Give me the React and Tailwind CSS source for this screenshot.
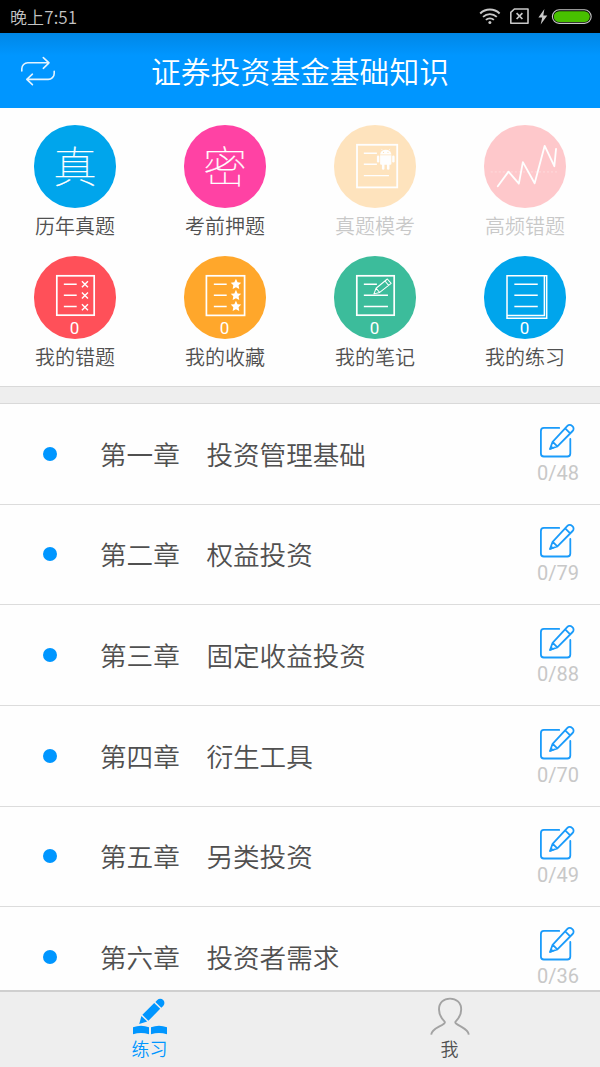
import clsx from "clsx";

const shortcuts = [
  { label: "历年真题", color: "bg-[#00a5ec]", char: "真" },
  { label: "考前押题", color: "bg-[#ff42a4]", char: "密" },
  { label: "真题模考", color: "bg-[#ffa72b]", icon: MockIcon, disabled: true },
  { label: "高频错题", color: "bg-[#ff5059]", icon: TrendIcon, disabled: true },
  { label: "我的错题", color: "bg-[#ff5059]", icon: WrongIcon, count: 0 },
  { label: "我的收藏", color: "bg-[#ffa72b]", icon: StarIcon, count: 0 },
  { label: "我的笔记", color: "bg-[#3cbc9b]", icon: NoteIcon, count: 0 },
  { label: "我的练习", color: "bg-[#00a5ec]", icon: BookIcon, count: 0 },
];

const chapters = [
  { no: "第一章", name: "投资管理基础", total: 48 },
  { no: "第二章", name: "权益投资", total: 79 },
  { no: "第三章", name: "固定收益投资", total: 88 },
  { no: "第四章", name: "衍生工具", total: 70 },
  { no: "第五章", name: "另类投资", total: 49 },
  { no: "第六章", name: "投资者需求", total: 36 },
];

function IconBase({ children }) {
  return (
    <svg className="absolute inset-0 w-full h-full" viewBox="0.3 0.3 82 82" fill="none" stroke="white" strokeWidth="1.4">
      {children}
    </svg>
  );
}

function MockIcon() {
  return (
    <IconBase>
      <rect x="23.2" y="20" width="40" height="42.4" strokeWidth="1.8" />
      <path d="M30 28.4h13M30 39.4h13M30 50.7h25" />
      <g fill="white" stroke="none">
        <path d="M46.2 29.6a5.6 4.6 0 0 1 11.2 0z" />
        <path d="M46.2 30.4h11.2v8.4a1 1 0 0 1-1 1h-9.2a1 1 0 0 1-1-1z" />
        <rect x="43" y="30.6" width="2.4" height="7" rx="1.2" />
        <rect x="58.2" y="30.6" width="2.4" height="7" rx="1.2" />
        <rect x="48" y="38" width="2.5" height="6.8" rx="1.2" />
        <rect x="53" y="38" width="2.5" height="6.8" rx="1.2" />
      </g>
      <path d="M48.5 25.5l-1-1.4M55 25.5l1-1.4" strokeWidth="0.6" />
      <circle cx="49.6" cy="27.6" r="0.6" fill="#ffa72b" stroke="none" />
      <circle cx="54" cy="27.6" r="0.6" fill="#ffa72b" stroke="none" />
    </IconBase>
  );
}

function TrendIcon() {
  return (
    <IconBase>
      <path d="M7 47h68" strokeWidth="0.8" strokeDasharray="2 2" opacity="0.4" />
      <path
        d="M14 61.3L24.7 46.7 35 58.7 39 37.3 50.7 58.3 60.7 21 70.3 41.3 72 24"
        strokeWidth="1.8"
        strokeLinecap="round"
        strokeLinejoin="round"
      />
    </IconBase>
  );
}

function WrongIcon() {
  return (
    <IconBase>
      <rect x="23" y="20" width="37.2" height="39.2" strokeWidth="1.7" />
      <path d="M30 28.4h12.8M30 39.4h12.8M30 50.6h12.8" />
      <path
        d="M48 25.4l6 6M54 25.4l-6 6M48 36.6l6 6M54 36.6l-6 6M48 48.2l6 6M54 48.2l-6 6"
        strokeWidth="1.4"
      />
    </IconBase>
  );
}

function StarIcon() {
  return (
    <IconBase>
      <rect x="22.6" y="20" width="38" height="39.4" strokeWidth="1.7" />
      <path d="M30 28.4h12.8M30 39.4h12.8M30 50.6h12.8" />
      {[28.4, 39.4, 50.2].map((y) => (
        <path
          key={y}
          transform={`translate(52 ${y})`}
          d="M0-5.4L1.6-1.9 5.2-1.6 2.6 1 3.3 4.8 0 3-3.3 4.8-2.6 1-5.2-1.6-1.6-1.9z"
          fill="white"
          stroke="none"
        />
      ))}
    </IconBase>
  );
}

function NoteIcon() {
  return (
    <IconBase>
      <rect x="23" y="20" width="37.2" height="39.2" strokeWidth="1.7" />
      <path d="M30 28.4h13M30 39.4h24M30 50.6h24" />
      <path
        d="M40 38l2.2-5.6L53.4 23.2l3.8 4.4-11.4 9zM42.2 32.4l3.6 4.2M51 25.2l3.7 4.4"
        strokeWidth="1"
        strokeLinejoin="round"
      />
    </IconBase>
  );
}

function BookIcon() {
  return (
    <IconBase>
      <path d="M23.2 20h39.5v42.3H23.2z" strokeWidth="1.5" />
      <path d="M60.4 20v39.4H23.2" strokeWidth="1.5" />
      <path d="M30.5 28.4h23.3M30.5 39.4h23.3M30.5 50.6h23.3" />
    </IconBase>
  );
}

function StatusBar() {
  return (
    <div className="h-[33px] shrink-0 bg-black flex items-center justify-between pl-[10px] pr-2 text-[#c4c4c4]">
      <span className="text-[17px] leading-none tracking-[0.1px]">晚上7:51</span>
      <svg width="114" height="20" viewBox="478 7 114 20" fill="none" stroke="#c8c8c8">
        <path d="M480.2 13.4a14.2 14.2 0 0 1 19.4 0" strokeWidth="2" />
        <path d="M483 16.8a10 10 0 0 1 13.8 0M485.9 19.9a5.8 5.8 0 0 1 8 0" strokeWidth="1.8" />
        <circle cx="489.9" cy="22.4" r="1.5" fill="#c8c8c8" stroke="none" />
        <path d="M514.4 9H528v14.2h-17.2V12.4z" strokeWidth="1.6" strokeLinejoin="round" />
        <path d="M516.6 13.2l5.8 5.8M522.4 13.2l-5.8 5.8" strokeWidth="1.7" />
        <path d="M544.4 9l-6 8.6h3.8l-1.5 7 6.6-9.2h-4z" fill="#c8c8c8" stroke="none" />
        <rect x="552.4" y="9.8" width="38.8" height="13.6" rx="6.8" strokeWidth="1.1" />
        <rect x="553.8" y="11.2" width="36" height="10.8" rx="5.4" fill="#48c000" stroke="none" />
      </svg>
    </div>
  );
}

function Header() {
  return (
    <header className="relative h-[75px] shrink-0 bg-[#0096ff] bg-linear-to-b from-[#0087e6] to-[#0096ff] to-30% flex items-center justify-center">
      <svg
        className="absolute left-5 top-[22px]"
        width="36"
        height="32"
        viewBox="20 55 36 32"
        fill="none"
        stroke="#e3f3ff"
        strokeWidth="1.6"
        strokeLinecap="round"
        strokeLinejoin="round"
      >
        <path d="M21.8 71v-2.2a6 6 0 0 1 6-6H49M43.3 57.6l5.7 5.2-5.7 5.5" />
        <path d="M54.2 71.2v2.2a6 6 0 0 1-6 6H27M32.4 74.2l-5.6 5.2 5.6 5.3" />
      </svg>
      <h1 className="text-[29.8px] leading-none text-white">证券投资基金基础知识</h1>
    </header>
  );
}

function Shortcut({ item }) {
  const Icon = item.icon;
  return (
    <div className={clsx("flex flex-col items-center", item.disabled && "opacity-30")}>
      <div className={clsx("relative size-[82.4px] rounded-full flex justify-center", item.color)}>
        {item.char && (
          <span className="text-[43.5px] font-thin leading-[80px] text-white [-webkit-text-stroke:0.2px_white]">
            {item.char}
          </span>
        )}
        {Icon && <Icon />}
        {item.count !== undefined && (
          <span className="absolute bottom-px -ml-px font-[Roboto] font-normal text-[17px] leading-[20px] text-white">
            {item.count}
          </span>
        )}
      </div>
      <span className="text-[20px] leading-[35px] h-9">{item.label}</span>
    </div>
  );
}

function EditIcon() {
  return (
    <svg
      className="-ml-0.5"
      width="36"
      height="36"
      viewBox="0 0 36 36"
      fill="none"
      stroke="#1a9bfa"
      strokeWidth="1.8"
      strokeLinejoin="round"
      strokeLinecap="round"
    >
      <path d="M20.2 4.9H4.9a3 3 0 0 0-3 3v22.6a3 3 0 0 0 3 3h23.4a3 3 0 0 0 3-3V16" />
      <path d="M11 26l2.6-7.2L28.4 2.9a3.2 3.2 0 0 1 4.6-.1l.6.6a3.2 3.2 0 0 1 0 4.6L18.4 23.4zM13.8 18.9l4.5 4.5M26.2 5.3l5 5" />
      <path d="M11 26l1.2-3.2 2 2z" fill="#1a9bfa" strokeWidth="0.8" />
    </svg>
  );
}

function ChapterRow({ chapter }) {
  return (
    <li className="h-[100.67px] shrink-0 flex items-center border-b border-[#dcdcdc]">
      <span className="ml-[43px] size-[14px] rounded-full bg-[#0096ff]" />
      <span className="ml-[43px] text-[26.6px] leading-none">
        {chapter.no}　{chapter.name}
      </span>
      <div className="ml-auto mr-[21px] flex flex-col items-center">
        <EditIcon />
        <span className="pt-0.5 font-[Roboto] font-normal text-[20px] leading-[24px] text-[#c8c8c8]">
          0/{chapter.total}
        </span>
      </div>
    </li>
  );
}

function TabBar() {
  return (
    <nav className="h-[77px] shrink-0 grid grid-cols-2 bg-[#eeeeee] border-t-2 border-[#cfcfcf] text-[18px]">
      <div className="flex flex-col items-center pt-[5px] pr-px text-[#0096ff]">
        <svg width="36" height="38" viewBox="0 0 36 38" fill="currentColor">
          <path d="M7.2 27l2.2-8 5.8 5.6zM10.4 17.8L22.2 6l6 5.8-11.8 12zM23.4 4.9l1.9-1.9a4.1 4.1 0 0 1 5.9 5.9l-1.9 1.9z" />
          <path d="M1 30.2q8-3 16 0v7q-8-2.4-16 0zM19 30.2q8-3 16 0v7q-8-2.4-16 0z" />
        </svg>
        <span className="leading-[26px]">练习</span>
      </div>
      <div className="flex flex-col items-center pt-[5px] pr-px">
        <svg width="42" height="38" viewBox="0 0 42 38" fill="none" stroke="#a3a3a3" strokeWidth="1.9">
          <path d="M2.2 37.6c.4-5.8 8.4-7.4 13-11.2 1.2-1 .6-1.7-.2-2.6-3-3-5-6.6-5-11.4C10 5.4 14.8 1.6 21 1.6s11.2 3.8 11.2 10.8c0 4.8-2 8.4-5 11.4-.9.9-1.4 1.6-.2 2.6 4.6 3.8 12.4 5.4 12.8 11.2" />
        </svg>
        <span className="leading-[26px]">我</span>
      </div>
    </nav>
  );
}

export default function App() {
  return (
    <div
      lang="zh-CN"
      className="w-[600px] h-[1067px] flex flex-col overflow-hidden bg-[#fefefe] text-[#505050] font-['Noto_Sans_CJK_SC',sans-serif] font-[350]"
    >
      <StatusBar />
      <Header />
      <section className="h-[278px] shrink-0 grid grid-cols-4 content-start gap-y-[12.4px] pt-[17.4px]">
        {shortcuts.map((item) => (
          <Shortcut key={item.label} item={item} />
        ))}
      </section>
      <div className="h-[18px] shrink-0 bg-[#eeeeee] border-y border-[#d9d9d9]" />
      <ul className="flex-1 min-h-0 overflow-hidden flex flex-col">
        {chapters.map((chapter) => (
          <ChapterRow key={chapter.no} chapter={chapter} />
        ))}
      </ul>
      <TabBar />
    </div>
  );
}
